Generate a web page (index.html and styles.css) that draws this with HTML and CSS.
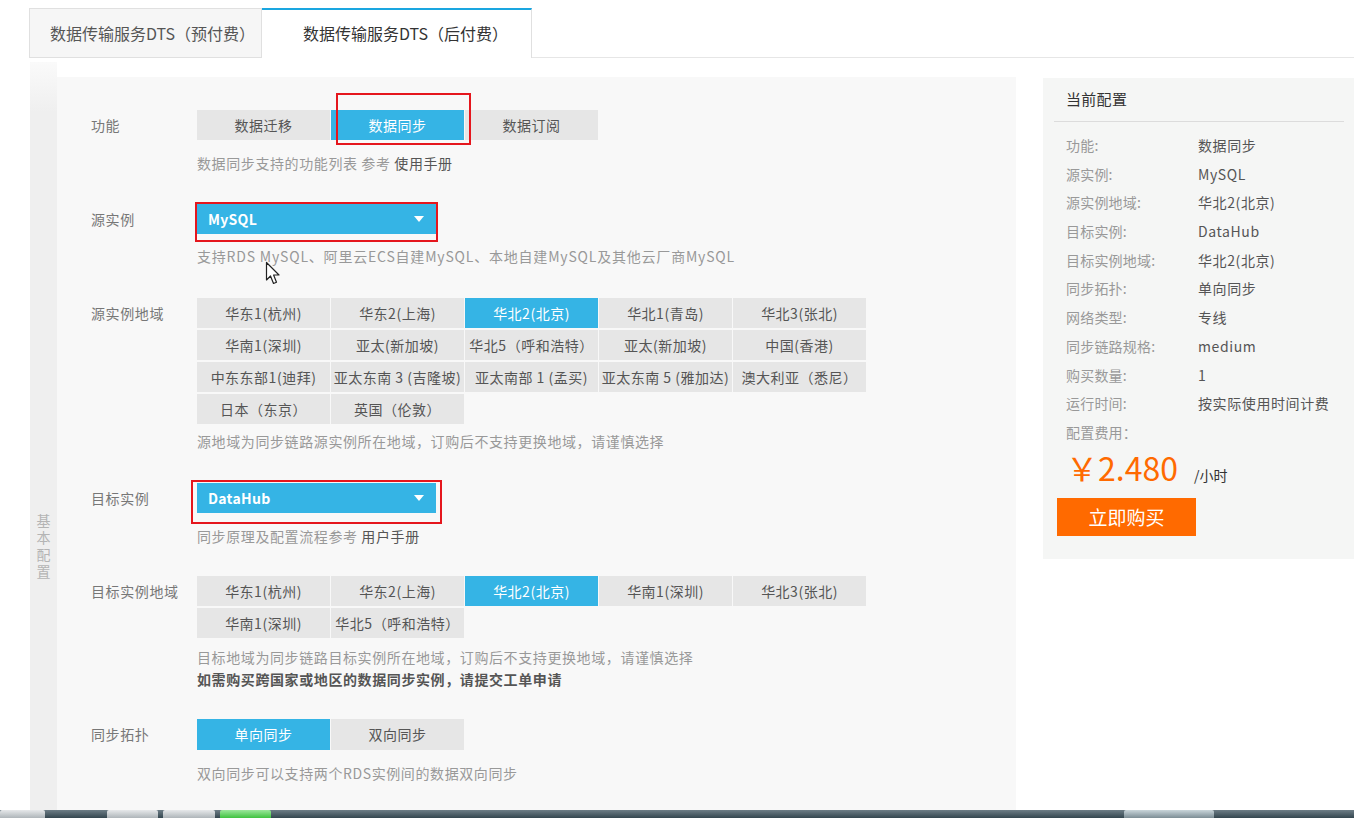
FILE: index.html
```html
<!DOCTYPE html>
<html lang="zh-CN">
<head>
<meta charset="utf-8">
<title>数据传输服务DTS</title>
<link rel="stylesheet" href="styles.css">
</head>
<body>
<div class="tabs">
  <div class="tab">数据传输服务DTS（预付费）</div>
  <div class="tab tab--active">数据传输服务DTS（后付费）</div>
  <div class="tab-rest"></div>
</div>

<div class="content">
  <aside class="strip"><span class="strip-text">基本配置</span></aside>

  <main class="main">
    <div class="field f1">
      <div class="field-label">功能</div>
      <div class="field-body">
        <div class="ctrl">
          <div class="opts">
            <div class="opt">数据迁移</div>
            <div class="opt opt--on">数据同步</div>
            <div class="opt">数据订阅</div>
          </div>
          <div class="mark mark-1"></div>
        </div>
        <div class="hint">数据同步支持的功能列表 参考 <span class="link">使用手册</span></div>
      </div>
    </div>

    <div class="field f2">
      <div class="field-label">源实例</div>
      <div class="field-body">
        <div class="ctrl">
          <div class="select">MySQL<span class="caret"></span></div>
          <div class="mark mark-2"></div>
        </div>
        <div class="hint">支持RDS MySQL、阿里云ECS自建MySQL、本地自建MySQL及其他云厂商MySQL</div>
      </div>
    </div>

    <div class="field f3">
      <div class="field-label">源实例地域</div>
      <div class="field-body">
        <div class="opts">
          <div class="opt">华东1(杭州)</div>
          <div class="opt">华东2(上海)</div>
          <div class="opt opt--on">华北2(北京)</div>
          <div class="opt">华北1(青岛)</div>
          <div class="opt">华北3(张北)</div>
          <div class="opt">华南1(深圳)</div>
          <div class="opt">亚太(新加坡)</div>
          <div class="opt">华北5（呼和浩特）</div>
          <div class="opt">亚太(新加坡)</div>
          <div class="opt">中国(香港)</div>
          <div class="opt">中东东部1(迪拜)</div>
          <div class="opt">亚太东南 3 (吉隆坡)</div>
          <div class="opt">亚太南部 1 (孟买)</div>
          <div class="opt">亚太东南 5 (雅加达)</div>
          <div class="opt">澳大利亚（悉尼）</div>
          <div class="opt">日本（东京）</div>
          <div class="opt">英国（伦敦）</div>
        </div>
        <div class="hint hint--grid">源地域为同步链路源实例所在地域，订购后不支持更换地域，请谨慎选择</div>
      </div>
    </div>

    <div class="field f4">
      <div class="field-label">目标实例</div>
      <div class="field-body">
        <div class="ctrl">
          <div class="select">DataHub<span class="caret"></span></div>
          <div class="mark mark-3"></div>
        </div>
        <div class="hint">同步原理及配置流程参考 <span class="link">用户手册</span></div>
      </div>
    </div>

    <div class="field f5">
      <div class="field-label">目标实例地域</div>
      <div class="field-body">
        <div class="opts">
          <div class="opt">华东1(杭州)</div>
          <div class="opt">华东2(上海)</div>
          <div class="opt opt--on">华北2(北京)</div>
          <div class="opt">华南1(深圳)</div>
          <div class="opt">华北3(张北)</div>
          <div class="opt">华南1(深圳)</div>
          <div class="opt">华北5（呼和浩特）</div>
        </div>
        <div class="hint hint--two">目标地域为同步链路目标实例所在地域，订购后不支持更换地域，请谨慎选择<br><span class="strong">如需购买跨国家或地区的数据同步实例，请提交工单申请</span></div>
      </div>
    </div>

    <div class="field f6">
      <div class="field-label">同步拓扑</div>
      <div class="field-body">
        <div class="opts">
          <div class="opt opt--on">单向同步</div>
          <div class="opt">双向同步</div>
        </div>
        <div class="hint">双向同步可以支持两个RDS实例间的数据双向同步</div>
      </div>
    </div>
  </main>

  <aside class="summary">
    <div class="summary-title">当前配置</div>
    <dl class="summary-list">
      <div class="srow"><dt>功能:</dt><dd>数据同步</dd></div>
      <div class="srow"><dt>源实例:</dt><dd>MySQL</dd></div>
      <div class="srow"><dt>源实例地域:</dt><dd>华北2(北京)</dd></div>
      <div class="srow"><dt>目标实例:</dt><dd>DataHub</dd></div>
      <div class="srow"><dt>目标实例地域:</dt><dd>华北2(北京)</dd></div>
      <div class="srow"><dt>同步拓扑:</dt><dd>单向同步</dd></div>
      <div class="srow"><dt>网络类型:</dt><dd>专线</dd></div>
      <div class="srow"><dt>同步链路规格:</dt><dd>medium</dd></div>
      <div class="srow"><dt>购买数量:</dt><dd>1</dd></div>
      <div class="srow"><dt>运行时间:</dt><dd>按实际使用时间计费</dd></div>
      <div class="srow"><dt>配置费用：</dt></div>
    </dl>
    <div class="price"><span class="price-num">￥2.480</span><span class="price-unit">/小时</span></div>
    <div class="buy">立即购买</div>
  </aside>
</div>

<div class="taskbar">
  <span class="tb tb-1"></span>
  <span class="tb tb-2"></span>
  <span class="tb tb-3"></span>
  <span class="tb tb-green"></span>
  <span class="tb-fill"></span>
  <span class="tb tb-tray"></span>
</div>

<svg class="cursor" width="18" height="26" viewBox="0 0 18 26" aria-hidden="true">
  <path d="M1.5 1.5 L1.5 19 L5.5 15 L8.5 22.5 L11.5 21.3 L8.6 14 L14 14 Z" fill="#ffffff" stroke="#222" stroke-width="1.2" stroke-linejoin="round"/>
</svg>
</body>
</html>
```

FILE: styles.css
```css
* { box-sizing: border-box; }

html, body {
  margin: 0;
  padding: 0;
}

body {
  width: 1354px;
  height: 818px;
  overflow: hidden;
  position: relative;
  background: #ffffff;
  font-family: "Noto Sans CJK SC", "Microsoft YaHei", sans-serif;
  font-size: 14px;
  letter-spacing: 0.6px;
  color: #555;
}

/* ---------- tabs ---------- */
.tabs {
  display: flex;
  padding: 8px 0 0 29px;
  height: 58px;
}

.tab {
  width: 233px;
  height: 50px;
  line-height: 48px;
  text-align: center;
  padding-left: 14px;
  font-size: 16px;
  letter-spacing: 0;
  color: #555;
  background: #f6f6f6;
  border: 1px solid #e0e0e0;
}

.tab--active {
  width: 270px;
  padding-left: 18px;
  background: #ffffff;
  color: #333;
  border: 0;
  border-top: 2px solid #1aa6e0;
  border-right: 1px solid #e0e0e0;
  line-height: 46px;
}

.tab-rest {
  flex: 1;
  border-bottom: 1px solid #e6e6e6;
}

/* ---------- content ---------- */
.content {
  display: flex;
  align-items: flex-start;
  height: 752px;
}

.strip {
  width: 27px;
  margin-left: 30px;
  margin-top: 4px;
  height: 748px;
  background: linear-gradient(to bottom, #fafafa 0px, #efefef 50px, #efefef 100%);
  display: flex;
  justify-content: center;
  padding-top: 450px;
}

.strip-text {
  width: 14px;
  font-size: 14px;
  line-height: 17px;
  letter-spacing: 0;
  color: #b4b4b4;
  text-align: center;
}

.main {
  width: 959px;
  height: 733px;
  margin-top: 19px;
  background: #f8f8f8;
  padding: 33px 0 0 34px;
}

.field {
  display: flex;
}

.field-label {
  width: 106px;
  flex-shrink: 0;
  line-height: 30px;
  color: #777;
}

.f1 { margin-bottom: 31px; }
.f2 { margin-bottom: 32px; }
.f3 { margin-bottom: 32px; }
.f4 { margin-bottom: 30px; }
.f5 { margin-bottom: 29px; }

.ctrl {
  position: relative;
}

.opts {
  display: grid;
  grid-template-columns: repeat(5, 133px);
  gap: 2px 1px;
}

.opt {
  height: 30px;
  line-height: 30px;
  background: #e6e6e6;
  text-align: center;
  color: #555;
  letter-spacing: 0.5px;
  white-space: nowrap;
}

.f6 .opt { height: 31px; line-height: 31px; }

.opt--on {
  background: #35b4e5;
  color: #ffffff;
}

.select {
  position: relative;
  width: 239px;
  height: 30px;
  line-height: 30px;
  background: #35b4e5;
  color: #ffffff;
  font-weight: bold;
  font-size: 14px;
  letter-spacing: 0.3px;
  padding-left: 11px;
}

.caret {
  position: absolute;
  right: 12px;
  top: 12px;
  width: 0;
  height: 0;
  border-left: 5px solid transparent;
  border-right: 5px solid transparent;
  border-top: 6px solid #ffffff;
}

.mark {
  position: absolute;
  border: 2px solid #e5161d;
  pointer-events: none;
}

.mark-1 { left: 139px; top: -17px; width: 135px; height: 52px; }
.mark-2 { left: -2px; top: -2px; width: 243px; height: 40px; }
.mark-3 { left: -6px; top: -3px; width: 251px; height: 44px; }

.hint {
  margin-top: 12px;
  line-height: 20px;
  color: #999;
  white-space: nowrap;
}

.f1 .hint { margin-top: 13px; }
.f2 .hint { letter-spacing: 0.8px; }
.f4 .hint { margin-top: 13px; }
.f6 .hint { margin-top: 13px; }

.hint--grid { margin-top: 7px; }

.hint--two {
  margin-top: 8px;
  line-height: 22px;
}

.link { color: #555; }

.strong {
  color: #555;
  font-weight: bold;
}

/* ---------- summary ---------- */
.summary {
  width: 311px;
  margin-left: 27px;
  margin-top: 20px;
  background: #f5f6f5;
  padding-bottom: 23px;
}

.summary-title {
  margin: 0 10px 0 11px;
  padding: 10px 0 11px 12px;
  line-height: 22px;
  font-size: 15px;
  letter-spacing: 0.3px;
  color: #333;
  border-bottom: 1px solid #dcdcdc;
}

.summary-list {
  margin: 0;
  padding: 9px 0 0 23px;
}

.srow {
  display: flex;
  height: 28.7px;
  line-height: 28.7px;
}

.srow dt {
  width: 132px;
  color: #999;
  letter-spacing: 0.2px;
}

.srow dd {
  margin: 0;
  color: #555;
}

.price {
  display: flex;
  align-items: baseline;
  padding-left: 23px;
  margin-top: 2px;
  height: 36px;
  line-height: 36px;
  letter-spacing: 0;
}

.price-num {
  font-size: 32px;
  color: #ff6a00;
}

.price-unit {
  margin-left: 16px;
  font-size: 14px;
  color: #333;
}

.buy {
  margin: 13px 0 0 14px;
  width: 139px;
  height: 38px;
  line-height: 38px;
  background: #ff6a00;
  color: #ffffff;
  font-size: 19px;
  letter-spacing: 0;
  text-align: center;
}

/* ---------- taskbar ---------- */
.taskbar {
  display: flex;
  height: 8px;
  background: linear-gradient(to bottom, #6d7d86, #34464f);
}

.tb {
  height: 8px;
  border-radius: 2px 2px 0 0;
}

.tb-1 { width: 45px; background: linear-gradient(#e6e8ea, #aeb5b9); margin-right: 62px; }
.tb-2 { width: 51px; background: linear-gradient(#e6e8ea, #aeb5b9); margin-right: 5px; }
.tb-3 { width: 52px; background: linear-gradient(#e6e8ea, #aeb5b9); margin-right: 5px; }
.tb-green { width: 51px; background: linear-gradient(#9be79b, #3fc23f); }
.tb-fill { flex: 1; }
.tb-tray { width: 90px; background: linear-gradient(#c9d5da, #7c8d95); margin-right: 140px; }

/* ---------- cursor overlay ---------- */
.cursor {
  position: absolute;
  left: 265px;
  top: 261px;
}
```
